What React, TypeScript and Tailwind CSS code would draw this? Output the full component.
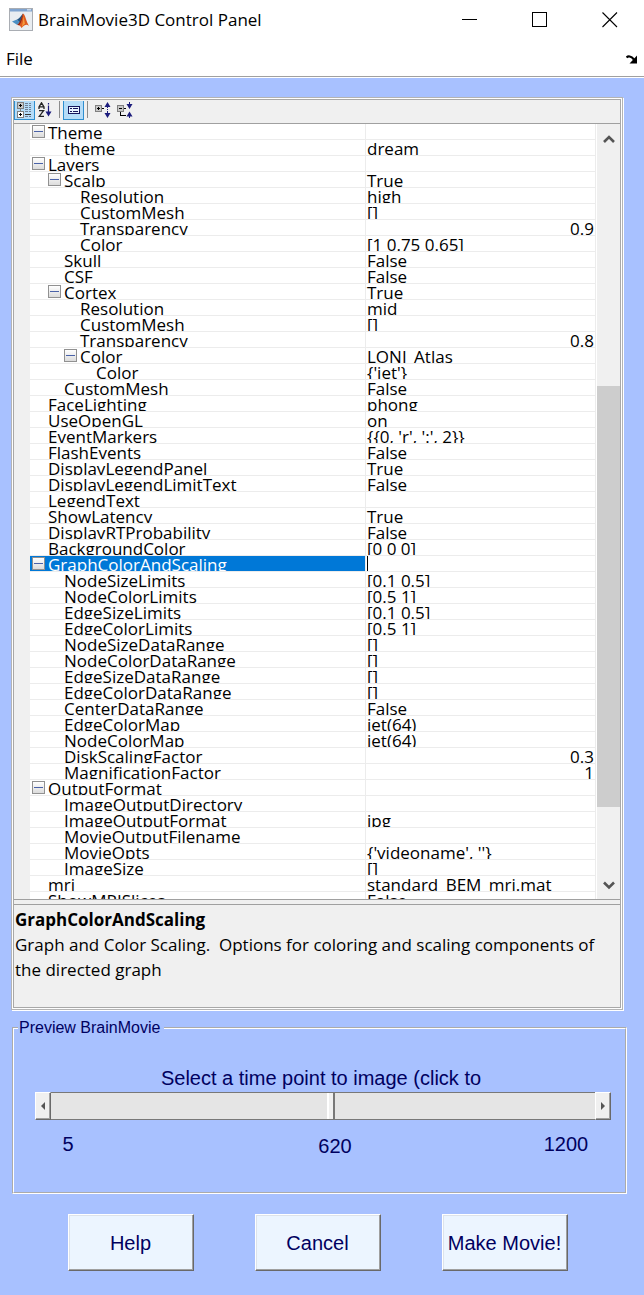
import { useState } from "react";
import type { ReactNode } from "react";

type Row = {
  name: string;
  depth: 0 | 1 | 2 | 3;
  value?: string;
  numeric?: boolean;
  group?: boolean;
};

const ROWS: Row[] = [
  { name: "Theme", depth: 0, group: true },
  { name: "theme", depth: 1, value: "dream" },
  { name: "Layers", depth: 0, group: true },
  { name: "Scalp", depth: 1, value: "True", group: true },
  { name: "Resolution", depth: 2, value: "high" },
  { name: "CustomMesh", depth: 2, value: "[]" },
  { name: "Transparency", depth: 2, value: "0.9", numeric: true },
  { name: "Color", depth: 2, value: "[1 0.75 0.65]" },
  { name: "Skull", depth: 1, value: "False" },
  { name: "CSF", depth: 1, value: "False" },
  { name: "Cortex", depth: 1, value: "True", group: true },
  { name: "Resolution", depth: 2, value: "mid" },
  { name: "CustomMesh", depth: 2, value: "[]" },
  { name: "Transparency", depth: 2, value: "0.8", numeric: true },
  { name: "Color", depth: 2, value: "LONI_Atlas", group: true },
  { name: "Color", depth: 3, value: "{'jet'}" },
  { name: "CustomMesh", depth: 1, value: "False" },
  { name: "FaceLighting", depth: 0, value: "phong" },
  { name: "UseOpenGL", depth: 0, value: "on" },
  { name: "EventMarkers", depth: 0, value: "{{0, 'r', ':', 2}}" },
  { name: "FlashEvents", depth: 0, value: "False" },
  { name: "DisplayLegendPanel", depth: 0, value: "True" },
  { name: "DisplayLegendLimitText", depth: 0, value: "False" },
  { name: "LegendText", depth: 0 },
  { name: "ShowLatency", depth: 0, value: "True" },
  { name: "DisplayRTProbability", depth: 0, value: "False" },
  { name: "BackgroundColor", depth: 0, value: "[0 0 0]" },
  { name: "GraphColorAndScaling", depth: 0, group: true },
  { name: "NodeSizeLimits", depth: 1, value: "[0.1 0.5]" },
  { name: "NodeColorLimits", depth: 1, value: "[0.5 1]" },
  { name: "EdgeSizeLimits", depth: 1, value: "[0.1 0.5]" },
  { name: "EdgeColorLimits", depth: 1, value: "[0.5 1]" },
  { name: "NodeSizeDataRange", depth: 1, value: "[]" },
  { name: "NodeColorDataRange", depth: 1, value: "[]" },
  { name: "EdgeSizeDataRange", depth: 1, value: "[]" },
  { name: "EdgeColorDataRange", depth: 1, value: "[]" },
  { name: "CenterDataRange", depth: 1, value: "False" },
  { name: "EdgeColorMap", depth: 1, value: "jet(64)" },
  { name: "NodeColorMap", depth: 1, value: "jet(64)" },
  { name: "DiskScalingFactor", depth: 1, value: "0.3", numeric: true },
  { name: "MagnificationFactor", depth: 1, value: "1", numeric: true },
  { name: "OutputFormat", depth: 0, group: true },
  { name: "ImageOutputDirectory", depth: 1 },
  { name: "ImageOutputFormat", depth: 1, value: "jpg" },
  { name: "MovieOutputFilename", depth: 1 },
  { name: "MovieOpts", depth: 1, value: "{'videoname', ''}" },
  { name: "ImageSize", depth: 1, value: "[]" },
  { name: "mri", depth: 0, value: "standard_BEM_mri.mat" },
  { name: "ShowMRISlices", depth: 0, value: "False" },
];

const INDENT = ["pl-0", "pl-4", "pl-8", "pl-12"];
const SELECTED = "GraphColorAndScaling";

function MatlabIcon() {
  return (
    <svg width="24" height="24" viewBox="0 0 24 24" aria-hidden="true">
      <rect x="0.5" y="0.5" width="23" height="22" fill="#e9edf1" stroke="#a9adb3" />
      <rect x="1" y="1" width="22" height="2.5" fill="#7fa3cf" />
      <rect x="18" y="1" width="4" height="1.5" fill="#c9d8ea" />
      <path d="M3 13.5 L8 11.5 L11 14.5 L8.3 17 Z" fill="#4a8fc4" />
      <path d="M8 11.5 C10.5 10.5 12 7.5 14 5.5 L13 11 L11 14.5 Z" fill="#245583" />
      <path d="M14 5.5 C16 6 17.5 14 20 18 C17.5 15.8 16 16.5 12.5 20 C11.5 18 10.5 17 8.3 17 C11.5 15 12.5 9 14 5.5 Z" fill="#dd5a1f" />
      <path d="M14 5.5 C13.8 10 12.5 14 10.2 17.2 C9.6 17 9 17 8.3 17 C11.5 15 12.5 9 14 5.5 Z" fill="#8c2414" />
      <path d="M14.3 8 C15 10 15.4 13 16 15.8 C15 16.4 14 17.5 12.8 19 C14 14 14.4 11 14.3 8 Z" fill="#f59b3c" />
    </svg>
  );
}

function CategorizedIcon() {
  return (
    <svg width="15" height="17" viewBox="0 0 15 17" shapeRendering="crispEdges" className="shrink-0" aria-hidden="true">
      <path d="M3.5 7 V11" stroke="#808080" />
      <rect x="0.5" y="0.5" width="6" height="6" fill="#c8c8c8" stroke="#808080" />
      <rect x="0.5" y="9.5" width="6" height="6" fill="#fff" stroke="#808080" />
      <path d="M2 3.5 H5 M3.5 2 V5 M2 12.5 H5 M3.5 11 V14" stroke="#000" />
      <path d="M8 1.5 H11 M8 3.5 H11 M8 5.5 H11 M8 7.5 H11 M8 9.5 H11 M8 14.5 H11 M12 1.5 H14 M12 3.5 H14 M12 5.5 H14 M12 7.5 H14 M12 9.5 H14 M12 14.5 H14" stroke="#6f7f95" />
      <path d="M8 12.5 H14" stroke="#333" />
    </svg>
  );
}

function SortIcon() {
  return (
    <svg width="15" height="17" viewBox="0 0 15 17" className="shrink-0" aria-hidden="true">
      <path d="M1 7 V5 L3.5 0.8 L6 5 V7 M1.5 4.8 H5.5" fill="none" stroke="#222" strokeWidth="1.3" />
      <path d="M1 8.6 H5.6 L1.2 14.4 H6" fill="none" stroke="#222" strokeWidth="1.3" />
      <path d="M10.5 1 V2.5 M10.5 3.5 V10" stroke="#1c1c7c" strokeWidth="1.2" />
      <path d="M7.5 9.5 H13.5 L10.5 14.5 Z" fill="#1c1c7c" />
    </svg>
  );
}

function DescriptionIcon() {
  return (
    <svg width="12" height="8" viewBox="0 0 12 8" shapeRendering="crispEdges" className="shrink-0" aria-hidden="true">
      <rect x="0.5" y="0.5" width="11" height="7" fill="#e8f4ff" stroke="#15155c" />
      <path d="M2 2.5 H4 M5 2.5 H10 M2 5.5 H4 M5 5.5 H10" stroke="#15155c" />
    </svg>
  );
}

function ExpandIcon() {
  return (
    <svg width="17" height="17" viewBox="0 0 17 17" className="shrink-0" aria-hidden="true">
      <g shapeRendering="crispEdges">
        <rect x="0.5" y="3.5" width="6" height="6" fill="#c8c8c8" stroke="#808080" />
        <path d="M2 6.5 H5 M3.5 5 V8 M7 6.5 H9" stroke="#000" />
        <path d="M12.5 5 V6 M12.5 7 V8 M12.5 9 V11" stroke="#1c1c7c" />
      </g>
      <path d="M9.5 5 H15.5 L12.5 0 Z M9.5 11 H15.5 L12.5 16 Z" fill="#1c1c7c" />
    </svg>
  );
}

function CollapseIcon() {
  return (
    <svg width="17" height="17" viewBox="0 0 17 17" className="shrink-0" aria-hidden="true">
      <g shapeRendering="crispEdges">
        <rect x="0.5" y="3.5" width="6" height="6" fill="#c8c8c8" stroke="#808080" />
        <path d="M2 6.5 H5 M7 6.5 H9 M3.5 10 V13.5 H9" fill="none" stroke="#000" />
        <path d="M12.5 0 V2 M12.5 14 V16" stroke="#1c1c7c" />
      </g>
      <path d="M9.5 2 H15.5 L12.5 7 Z M9.5 14.5 H15.5 L12.5 9.5 Z" fill="#1c1c7c" />
    </svg>
  );
}

function ToolButton({ label, active, children }: { label: string; active?: boolean; children: ReactNode }) {
  return (
    <button
      type="button"
      aria-label={label}
      aria-pressed={active}
      className={
        active
          ? "flex h-[19px] w-[21px] shrink-0 items-center justify-center border border-t-0 border-[#2f8fd0] bg-[#b5dcf8]"
          : "flex h-[19px] w-[21px] shrink-0 items-center justify-center"
      }
    >
      {children}
    </button>
  );
}

function PropertyRow({ row }: { row: Row }) {
  const selected = row.name === SELECTED;
  return (
    <tr className="h-4">
      <th scope="row" className="border-r border-b border-[#ececec] p-0 text-left font-normal">
        <div className={selected ? "bg-[#0078d7] text-white" : ""}>
          <div className={`flex h-[15px] overflow-hidden leading-[17px] whitespace-nowrap ${INDENT[row.depth]}`}>
            <span className="flex w-[18px] shrink-0 items-start pt-px pl-0.5">
              {row.group && (
                <button
                  type="button"
                  aria-label={`Collapse ${row.name}`}
                  className="flex h-[13px] w-[13px] items-center justify-center border border-[#919191] bg-linear-to-b from-white to-[#dcdcdc]"
                >
                  <span className="h-px w-[9px] bg-[#4a62a8]" />
                </button>
              )}
            </span>
            {row.name}
          </div>
        </div>
      </th>
      <td className="border-r border-b border-[#ececec] p-0">
        <div className={`flex h-[15px] overflow-hidden px-px leading-[17px] whitespace-nowrap ${row.numeric ? "justify-end" : ""}`}>
          {selected ? <span className="w-px bg-black" /> : row.value}
        </div>
      </td>
    </tr>
  );
}

function ArrowButton({ label, path }: { label: string; path: string }) {
  return (
    <button
      type="button"
      aria-label={label}
      className="flex w-4 shrink-0 items-center justify-center border border-t-white border-r-[#696969] border-b-[#696969] border-l-white bg-[#f0f0f0] shadow-[inset_-1px_-1px_#a0a0a0]"
    >
      <svg width="4" height="8" viewBox="0 0 4 8" className="shrink-0" aria-hidden="true">
        <path d={path} fill="#555" />
      </svg>
    </button>
  );
}

function PushButton({ children }: { children: ReactNode }) {
  return (
    <button
      type="button"
      className="h-[57px] w-[126px] border border-t-white border-r-[#696969] border-b-[#696969] border-l-white bg-[#ecf5ff] text-xl whitespace-nowrap shadow-[inset_-1px_-1px_#a0a0a0,inset_1px_1px_#dde3ea]"
    >
      {children}
    </button>
  );
}

export default function App() {
  const [time, setTime] = useState(620);
  return (
    <div className="flex min-h-screen flex-col border-b border-[#707070] bg-[#a8c1ff] font-['Open_Sans',sans-serif] text-[17px] text-black">
      <header className="border-b border-[#a0a0a0] bg-white">
        <div className="flex h-10 items-center pr-[26px] pl-[9px]">
          <MatlabIcon />
          <h1 className="flex-1 pl-[5px] whitespace-nowrap">BrainMovie3D Control Panel</h1>
          <div className="flex gap-[54px]">
            <button type="button" aria-label="Minimize">
              <svg width="16" height="16" viewBox="0 0 16 16" shapeRendering="crispEdges"><path d="M0 7.5 H15" stroke="#000" /></svg>
            </button>
            <button type="button" aria-label="Maximize">
              <svg width="16" height="16" viewBox="0 0 16 16" shapeRendering="crispEdges"><rect x="0.5" y="0.5" width="14" height="14" fill="none" stroke="#000" /></svg>
            </button>
            <button type="button" aria-label="Close">
              <svg width="16" height="16" viewBox="0 0 16 16"><path d="M0.5 0.5 L15 15 M15 0.5 L0.5 15" stroke="#000" strokeWidth="1.1" /></svg>
            </button>
          </div>
        </div>
        <nav className="flex h-9 items-center justify-between px-1.5 pt-0.5">
          <button type="button">File</button>
          <button type="button" aria-label="Dock window">
            <svg width="12" height="9" viewBox="0 0 12 9">
              <path d="M0.5 2.5 C2 0.8 5 0.8 8 4.5" fill="none" stroke="#000" strokeWidth="2.2" />
              <path d="M11 0.5 V8.5 H3.5 Z" fill="#000" />
            </svg>
          </button>
        </nav>
      </header>

      <main className="border-t border-white px-[11px] pt-[19px]">
        <section className="mr-2.5 border border-[#b4b4b4] bg-white p-px shadow-[1px_1px_#fff]">
          <div className="border border-[#a8a8a8] bg-[#f0f0f0]">
            <div role="toolbar" aria-label="Property view" className="flex h-6 items-start border-b border-[#a0a0a0] pt-px">
              <ToolButton label="Categorized" active><CategorizedIcon /></ToolButton>
              <ToolButton label="Sort alphabetically"><SortIcon /></ToolButton>
              <span className="mx-[3px] h-[17px] w-px bg-[#8c8c8c]" />
              <ToolButton label="Show description" active><DescriptionIcon /></ToolButton>
              <span className="mx-[3px] h-[17px] w-px bg-[#8c8c8c]" />
              <div className="flex gap-px pl-0.5">
                <ToolButton label="Expand all"><ExpandIcon /></ToolButton>
                <ToolButton label="Collapse all"><CollapseIcon /></ToolButton>
              </div>
            </div>

            <div className="flex h-[775px]">
              <div className="min-w-0 flex-1 overflow-hidden bg-white pr-px">
                <div className="border-l-16 border-[#f0f0f0]">
                  <table className="w-full table-fixed border-separate border-spacing-0">
                    <colgroup>
                      <col className="w-84" />
                      <col />
                    </colgroup>
                    <tbody>
                      {ROWS.map((row, i) => (
                        <PropertyRow key={i} row={row} />
                      ))}
                    </tbody>
                  </table>
                </div>
              </div>
              <div className="flex w-[23px] shrink-0 flex-col items-center">
                <button type="button" aria-label="Scroll up" className="flex h-[30px] items-center">
                  <svg width="12" height="10" viewBox="0 0 12 10"><path d="M1 8 L6 3 L11 8" fill="none" stroke="#555" strokeWidth="2.6" /></svg>
                </button>
                <div className="flex w-full flex-1 flex-col">
                  <div className="grow-[232]" />
                  <div className="grow-[421] bg-[#cdcdcd]" />
                  <div className="grow-[64]" />
                </div>
                <button type="button" aria-label="Scroll down" className="flex h-7 items-center">
                  <svg width="12" height="10" viewBox="0 0 12 10"><path d="M1 2.5 L6 7.5 L11 2.5" fill="none" stroke="#555" strokeWidth="2.6" /></svg>
                </button>
              </div>
            </div>

            <div className="h-1.5 border-y border-[#a0a0a0]" />
            <div className="h-[102px] px-px pt-0.5 leading-[25px]">
              <h2 className="font-bold">{SELECTED}</h2>
              <p className="whitespace-pre-wrap">Graph and Color Scaling.  Options for coloring and scaling components of the directed graph</p>
            </div>
          </div>
        </section>

        <fieldset className="mt-2 mr-1.5 ml-px h-[176px] border-2 border-white pr-3.5 pl-[21px] font-['Liberation_Sans',Arial,sans-serif] text-xl text-[#00005f] [border-style:groove]">
          <legend className="-ml-[17px] pr-1 pl-px text-base leading-5">Preview BrainMovie</legend>
          <label htmlFor="time-point" className="block pt-[26px] pr-1 text-center leading-7">
            Select a time point to image (click to
          </label>
          <div className="flex h-7">
            <ArrowButton label="Earlier" path="M4 0 V8 L0 4 Z" />
            <input
              id="time-point"
              type="range"
              min={5}
              max={1200}
              value={time}
              onChange={(e) => setTime(Number(e.target.value))}
              className="h-7 min-w-0 flex-1 appearance-none border-y border-[#787878] bg-[#e5e5e5] [&::-webkit-slider-thumb]:h-[26px] [&::-webkit-slider-thumb]:w-2 [&::-webkit-slider-thumb]:appearance-none [&::-webkit-slider-thumb]:border-r-2 [&::-webkit-slider-thumb]:border-l-2 [&::-webkit-slider-thumb]:border-r-[#787878] [&::-webkit-slider-thumb]:border-l-white [&::-webkit-slider-thumb]:bg-[#f0f0f0]"
            />
            <ArrowButton label="Later" path="M0 0 V8 L4 4 Z" />
          </div>
          <div className="grid grid-cols-[66px_1fr_90px] pt-2.5 text-center">
            <span>5</span>
            <output htmlFor="time-point" className="pt-0.5 pl-12">{time}</output>
            <span>1200</span>
          </div>
        </fieldset>

        <div className="mr-[9px] flex justify-center gap-[61px] pt-5 pb-6 font-['Liberation_Sans',Arial,sans-serif] text-[#00005f]">
          <PushButton>Help</PushButton>
          <PushButton>Cancel</PushButton>
          <PushButton>Make Movie!</PushButton>
        </div>
      </main>
    </div>
  );
}
